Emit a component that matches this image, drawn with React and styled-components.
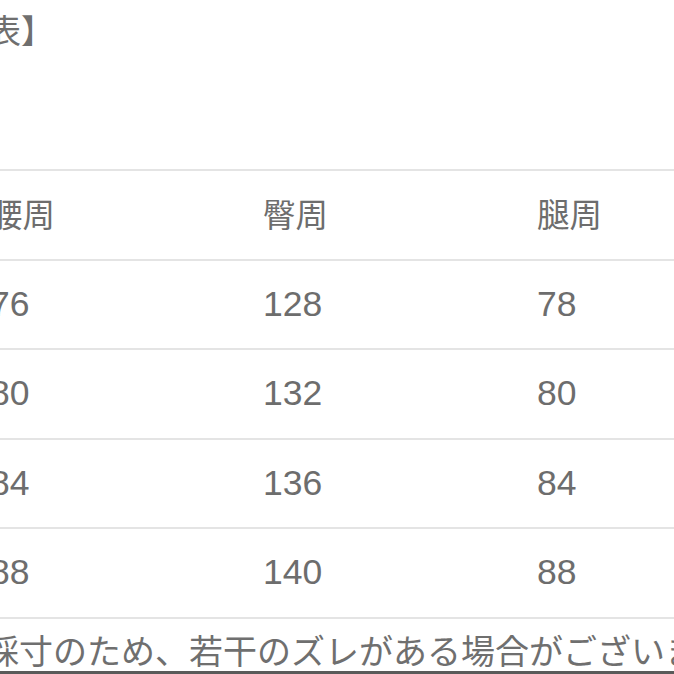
import React from 'react';
import styled, { createGlobalStyle } from 'styled-components';

const GlobalStyle = createGlobalStyle`
    html, body {
        margin: 0;
        padding: 0;
        background: #fff;
        overflow: hidden;
    }
    body {
        font-family: "Liberation Sans", "Noto Sans CJK JP", sans-serif;
        color: #6f6f6f;
    }
`;

const Page = styled.div`
    width: 700px;
    height: 674px;
    margin-left: -10px;
    display: flex;
    flex-direction: column;
    overflow: hidden;
`;

const Title = styled.div`
    font-family: "Noto Sans CJK JP", sans-serif;
    font-size: 33px;
    line-height: 33px;
    padding-top: 13px;
    margin-left: -133px;
    height: 169px;
    box-sizing: border-box;
    white-space: nowrap;
`;

const Table = styled.div`
    display: flex;
    flex-direction: column;
    border-top: 2px solid #e4e4e4;
`;

const Row = styled.div`
    display: grid;
    grid-template-columns: 273px 274px 1fr;
    align-items: center;
    height: 87.5px;
    border-bottom: 2px solid #e4e4e4;
`;

const Cell = styled.div`
    font-family: ${props => (props.head ? '"Noto Sans CJK JP", sans-serif' : '"Liberation Sans", sans-serif')};
    font-size: ${props => (props.head ? '32.5px' : '35.5px')};
    line-height: 1;
    margin-top: ${props => (props.head ? '-4px' : '0')};
    color: #6d6d6d;
    white-space: nowrap;
`;

const Note = styled.div`
    font-family: "Noto Sans CJK JP", sans-serif;
    font-size: 34px;
    line-height: 34px;
    margin-top: 14px;
    margin-left: -5px;
    white-space: nowrap;
    color: #6f6f6f;
`;

const BottomBar = styled.div`
    position: fixed;
    left: 0;
    right: 0;
    bottom: 0;
    height: 3px;
    background: #5a5a5a;
`;

const header = ['腰周', '臀周', '腿周'];
const rows = [
    ['76', '128', '78'],
    ['80', '132', '80'],
    ['84', '136', '84'],
    ['88', '140', '88'],
];

const App = () => {
    return (
        <>
            <GlobalStyle />
            <Page>
                <Title>【サイズ表】</Title>
                <Table>
                    <Row>
                        {header.map(h => (
                            <Cell head key={h}>
                                {h}
                            </Cell>
                        ))}
                    </Row>
                    {rows.map(r => (
                        <Row key={r.join('-')}>
                            {r.map((v, i) => (
                                <Cell key={i}>{v}</Cell>
                            ))}
                        </Row>
                    ))}
                </Table>
                <Note>採寸のため、若干のズレがある場合がございます。</Note>
            </Page>
            <BottomBar />
        </>
    );
};

export default App;
